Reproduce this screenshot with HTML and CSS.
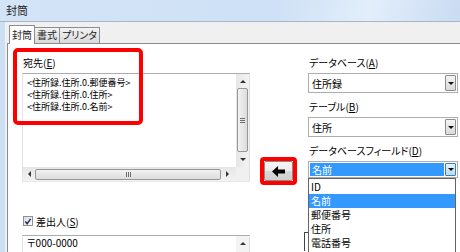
FILE: index.html
```html
<!DOCTYPE html>
<html lang="ja">
<head>
  <meta charset="UTF-8" />
  <title>封筒</title>
  <link rel="stylesheet" href="styles.css">
</head>
<body>
  <div class="titlebar">封筒</div>

  <div class="client">
    <div class="tabs">
      <div class="tab active">封筒</div>
      <div class="tab">書式</div>
      <div class="tab">プリンタ</div>
    </div>

    <div class="panel">
      <!-- 注釈の赤枠 -->
      <div class="mark"></div>

      <div class="cols">
        <div class="left">
          <div class="label">宛先(<u>E</u>)</div>
          <div class="textbox main-box">
            <div class="lines">
              <div>&lt;住所録.住所.0.郵便番号&gt;</div>
              <div>&lt;住所録.住所.0.住所&gt;</div>
              <div>&lt;住所録.住所.0.名前&gt;</div>
            </div>
            <div class="vscroll">
              <span class="arr up"></span>
              <span class="thumb-v"><i></i></span>
              <span class="arr down"></span>
            </div>
            <div class="hscroll">
              <span class="arr lt"></span>
              <span class="thumb-h"><i></i></span>
              <span class="arr rt"></span>
            </div>
            <div class="corner"></div>
          </div>

          <div class="check-row">
            <span class="checkbox">
              <svg width="9" height="9" viewBox="0 0 9 9"><path d="M1.5 4.5 L3.5 7 L7.5 1.5" fill="none" stroke="#1c2f6b" stroke-width="1.6"/></svg>
            </span>
            <span>差出人(<u>S</u>)</span>
          </div>
          <div class="textbox sender-box">
            <div class="lines">〒000-0000</div>
            <div class="vscroll">
              <span class="arr up"></span>
            </div>
          </div>
        </div>

        <div class="mid">
          <div class="arrow-mark">
            <button class="arrow-btn">
              <svg width="14" height="11" viewBox="0 0 14 11"><polygon points="0,5.5 6,0 6,3.5 13,3.5 13,7.5 6,7.5 6,11" fill="#000"/></svg>
            </button>
          </div>
        </div>

        <div class="right">
          <div class="label">データベース(<u>A</u>)</div>
          <div class="combo">住所録<span class="drop"></span></div>

          <div class="label gap">テーブル(<u>B</u>)</div>
          <div class="combo">住所<span class="drop"></span></div>

          <div class="label gap">データベースフィールド(<u>D</u>)</div>
          <div class="combo-wrap">
            <div class="combo open"><span class="sel">名前</span><span class="drop"></span></div>
            <ul class="list">
              <li>ID</li>
              <li class="hl">名前</li>
              <li>郵便番号</li>
              <li>住所</li>
              <li>電話番号</li>
            </ul>
          </div>
          <div class="behind"></div>
        </div>
      </div>
    </div>
  </div>
</body>
</html>
```

FILE: styles.css
```css
* {
  margin: 0;
  padding: 0;
  box-sizing: border-box;
}

html {
  overflow: hidden;
}

body {
  width: 460px;
  height: 252px;
  overflow: hidden;
  background: #f0f0f0;
  color: #000;
  font-family: "Noto Sans CJK JP", sans-serif;
  font-size: 10px;
  font-feature-settings: "palt";
}

u {
  text-decoration: underline;
}

.titlebar {
  height: 22px;
  line-height: 21px;
  padding-left: 6px;
  font-size: 11px;
  color: #1e1e1e;
  background: linear-gradient(100deg, #d3e4f7 0%, #cfe1f6 60%, #e2eefa 80%, #cadcf2 100%);
  border-bottom: 1px solid #a6b6c8;
}

.client {
  border-left: 5px solid #cddff2;
  padding-left: 2px;
  height: 230px;
}

.tabs {
  display: flex;
  align-items: flex-end;
  height: 21px;
  padding-left: 2px;
}

.tab {
  height: 16px;
  line-height: 14px;
  padding: 0 2px;
  margin-right: -1px;
  border: 1px solid #898c95;
  border-bottom: none;
  background: linear-gradient(#f3f3f3, #dadada);
  color: #222;
}

.tab.active {
  height: 19px;
  line-height: 17px;
  margin-bottom: -1px;
  background: #fff;
  position: relative;
  z-index: 1;
}

.panel {
  position: relative;
  height: 209px;
  overflow: hidden;
  background: #fff;
  border: 1px solid #898c95;
  border-right: none;
  border-bottom: none;
}

.mark {
  position: absolute;
  left: 5px;
  top: 4px;
  width: 130px;
  height: 77px;
  border: 4px solid #f00;
  border-radius: 5px;
  z-index: 2;
}

.cols {
  display: flex;
  align-items: flex-start;
  padding: 13px 0 0 14px;
}

.left {
  width: 228px;
}

.label {
  height: 12px;
  line-height: 12px;
  margin-bottom: 4px;
  padding-left: 1px;
  white-space: nowrap;
}

.label.gap {
  margin-top: 8px;
}

.textbox {
  display: grid;
  grid-template-columns: 1fr 13px;
  border: 1px solid #abadb3;
  border-color: #abadb3 #dbdfe6 #e3e9ef #e2e3ea;
  background: #fff;
}

.main-box {
  height: 109px;
  grid-template-rows: 1fr 14px;
}

.sender-box {
  height: 17px;
  margin-top: 8px;
  border-bottom: none;
}

.lines {
  padding: 3px 0 0 4px;
  font-size: 9px;
  line-height: 12px;
  white-space: nowrap;
  overflow: hidden;
}

.sender-box .lines {
  font-size: 10px;
  padding-top: 1px;
}

.vscroll {
  display: flex;
  flex-direction: column;
  align-items: center;
  background: linear-gradient(90deg, #e6e6e6, #f3f3f3);
}

.hscroll {
  display: flex;
  align-items: center;
  background: linear-gradient(#e6e6e6, #f3f3f3);
}

.corner {
  background: #f0f0f0;
}

.arr {
  display: flex;
  align-items: center;
  justify-content: center;
  width: 12px;
  height: 14px;
  flex: none;
}

.arr::before {
  content: "";
  border: 3px solid transparent;
}

.arr.up::before { border-bottom: 3px solid #333; border-top-width: 0; }
.arr.down::before { border-top: 3px solid #333; border-bottom-width: 0; }
.arr.lt::before { border-right: 3px solid #333; border-left-width: 0; }
.arr.rt::before { border-left: 3px solid #333; border-right-width: 0; }

.thumb-v,
.thumb-h {
  display: flex;
  align-items: center;
  justify-content: center;
  border: 1px solid #979797;
  border-radius: 2px;
}

.thumb-v {
  width: 11px;
  height: 64px;
  background: linear-gradient(90deg, #f2f2f2, #dcdcdc);
}

.thumb-h {
  height: 11px;
  width: 186px;
  background: linear-gradient(#f2f2f2, #dcdcdc);
}

.thumb-v i {
  width: 5px;
  height: 5px;
  background: repeating-linear-gradient(#6e6e6e 0 1px, transparent 1px 2px);
}

.thumb-h i {
  width: 5px;
  height: 5px;
  background: repeating-linear-gradient(90deg, #6e6e6e 0 1px, transparent 1px 2px);
}

.sender-box .vscroll {
  background: #f3f3f3;
}

.check-row {
  display: flex;
  align-items: center;
  gap: 3px;
  height: 12px;
  margin-top: 33px;
  padding-left: 1px;
  white-space: nowrap;
}

.checkbox {
  display: flex;
  align-items: center;
  justify-content: center;
  width: 10px;
  height: 10px;
  border: 1px solid #8e8f8f;
  background: linear-gradient(135deg, #dcdcdc, #fbfbfb);
}

.mid {
  margin: 100px 0 0 10px;
}

.arrow-mark {
  width: 37px;
  height: 28px;
  border: 4px solid #f00;
  border-radius: 4px;
  background: #fff;
}

.arrow-btn {
  display: flex;
  align-items: center;
  justify-content: center;
  width: 100%;
  height: 100%;
  border: 1px solid #8a8a8a;
  border-radius: 2px;
  background: linear-gradient(#f6f6f6 0%, #ebebeb 50%, #d8d8d8 51%, #d0d0d0 100%);
}

.right {
  width: 150px;
  margin-left: 11px;
}

.combo {
  display: flex;
  align-items: center;
  height: 20px;
  padding: 0 1px 0 3px;
  border: 1px solid #abadb3;
  background: #fff;
}

.drop {
  display: flex;
  align-items: center;
  justify-content: center;
  width: 11px;
  height: 16px;
  margin-left: auto;
  border: 1px solid #8c8c8c;
  border-radius: 1px;
  background: linear-gradient(#f5f5f5, #d9d9d9);
}

.drop::before {
  content: "";
  border: 3px solid transparent;
  border-top: 3px solid #111;
  border-bottom-width: 0;
}

.combo-wrap {
  position: relative;
}

.combo.open {
  height: 17px;
  padding-left: 1px;
}

.combo.open .drop {
  height: 13px;
  background: linear-gradient(#e9f3fc, #b9d9f3);
  border-color: #3c7fb1;
}

.sel {
  flex: 1;
  height: 13px;
  line-height: 13px;
  padding-left: 2px;
  margin-right: 1px;
  background: #3399ff;
  color: #fff;
}

.list {
  position: absolute;
  top: 100%;
  left: 0;
  width: 148px;
  height: 74px;
  list-style: none;
  padding-top: 1px;
  border: 1px solid #646464;
  border-bottom: none;
  background: #fff;
  z-index: 3;
}

.list li {
  height: 14px;
  line-height: 14px;
  padding-left: 2px;
}

.list li.hl {
  background: #3399ff;
  color: #fff;
}

.behind {
  width: 20px;
  height: 19px;
  margin: 54px 0 0 -4px;
  border-left: 1px solid #444;
  border-top: 1px solid #444;
}
```
